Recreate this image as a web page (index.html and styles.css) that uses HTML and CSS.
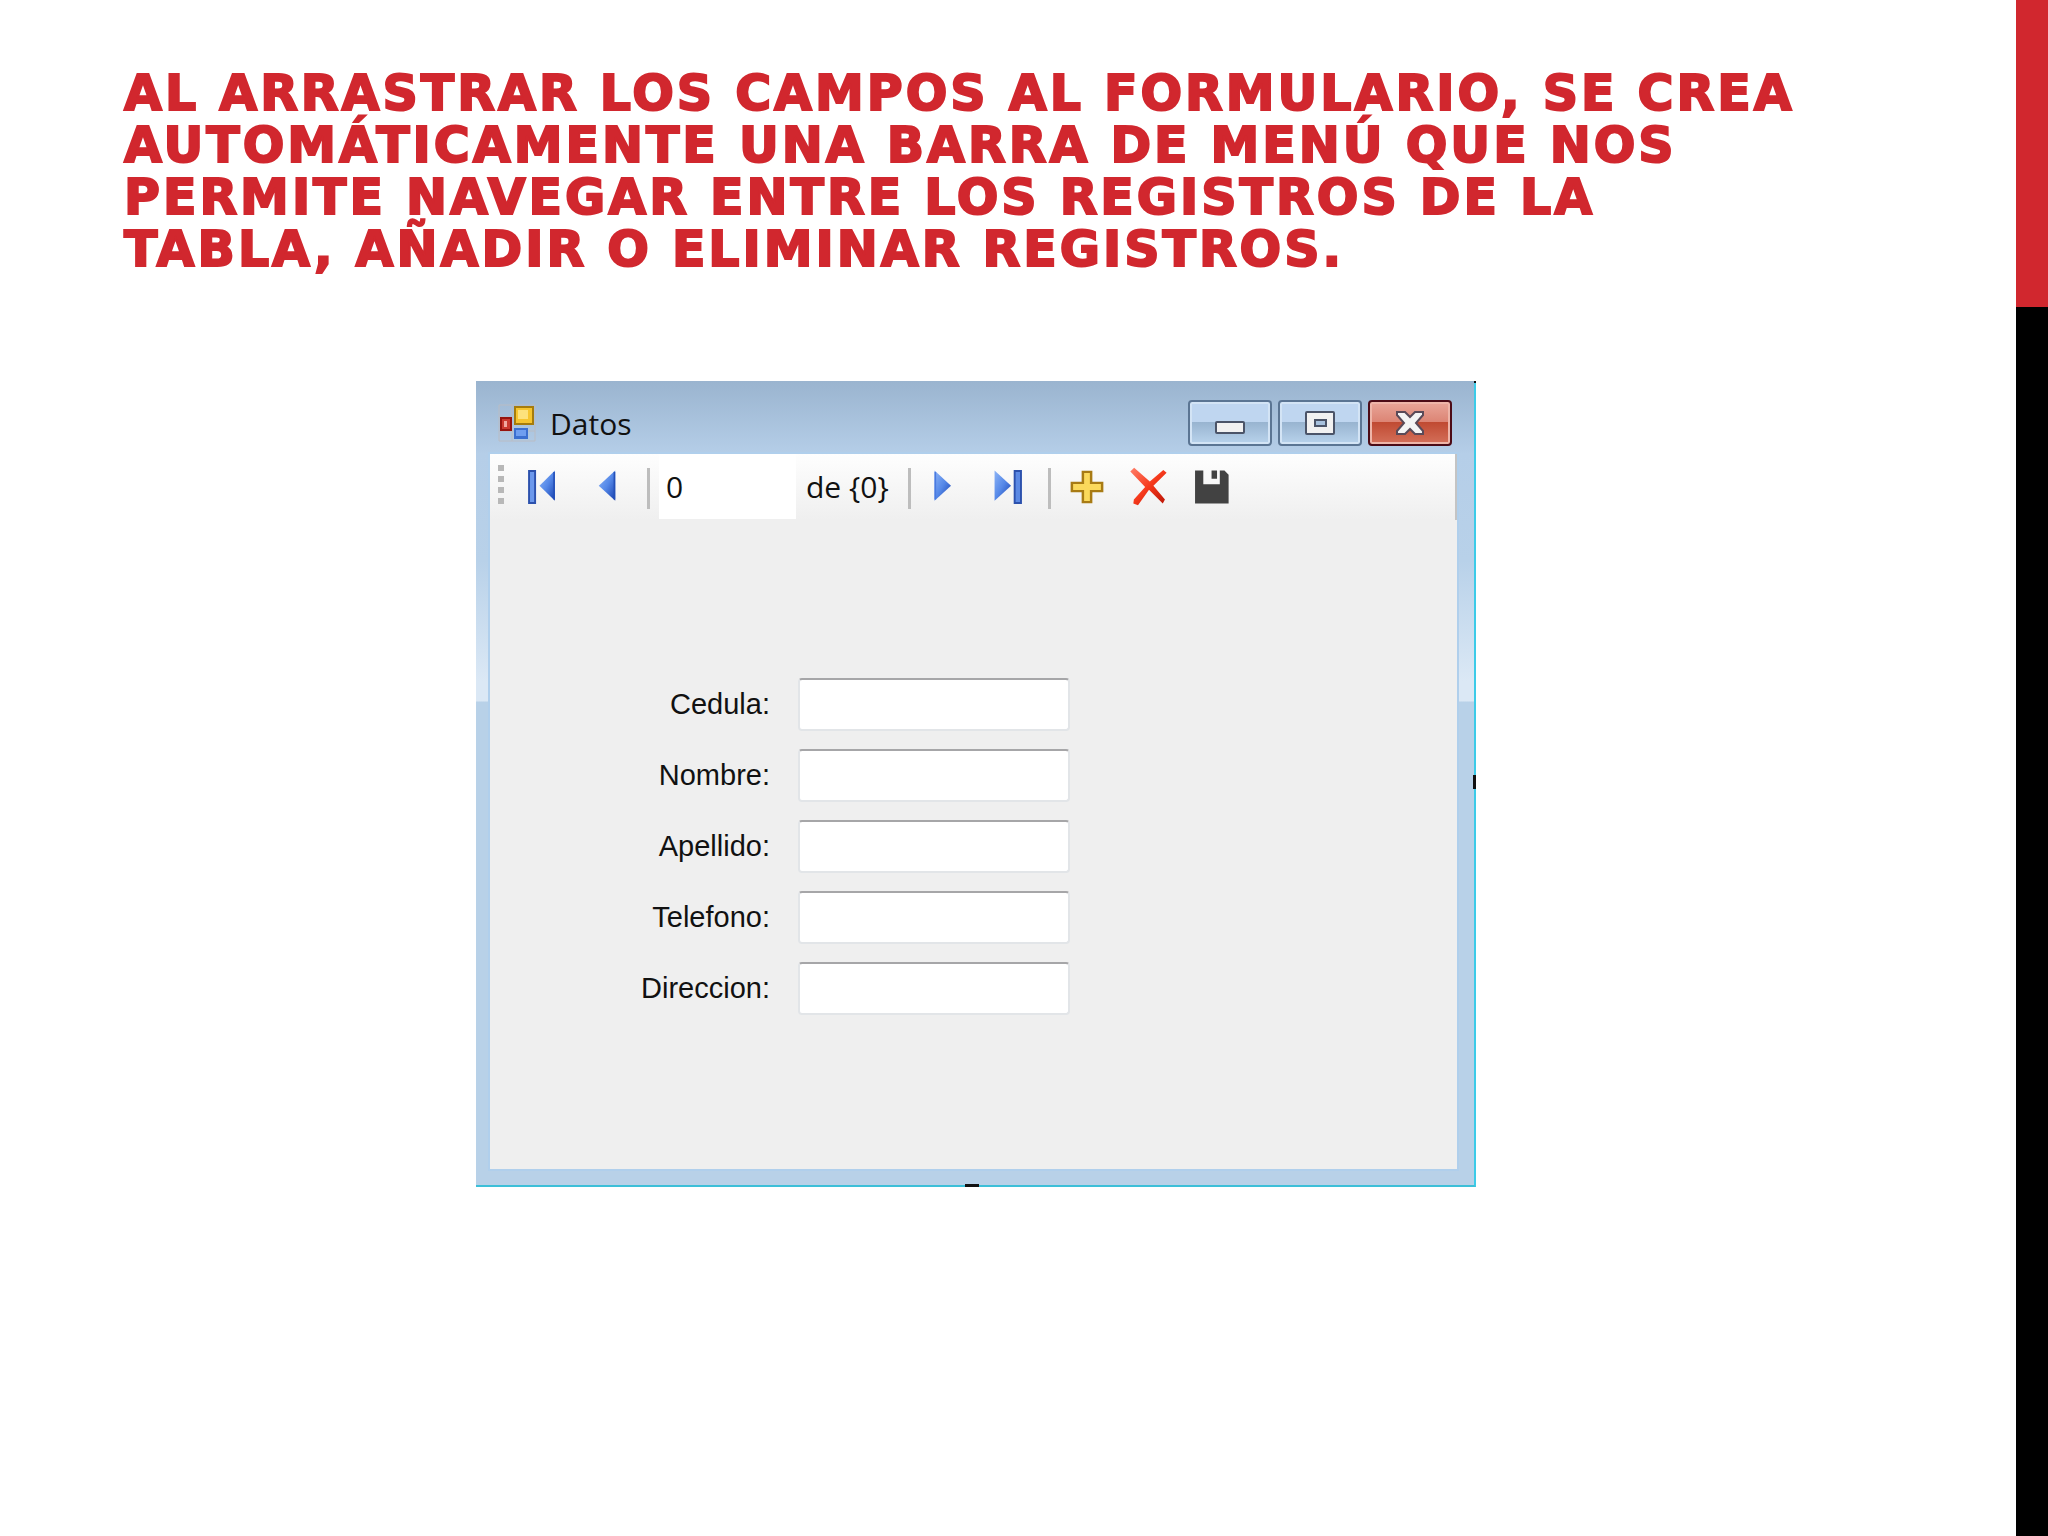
FILE: index.html
```html
<!DOCTYPE html>
<html lang="es">
<head>
  <meta charset="UTF-8">
  <meta name="viewport" content="width=device-width, initial-scale=1">
  <title>Barra de menú</title>
  <link rel="stylesheet" href="styles.css">
</head>
<body>

<main class="slide">
  <h1>Al arrastrar los campos al formulario, se crea automáticamente una barra de menú que nos permite navegar entre los registros de la tabla, añadir o eliminar registros.</h1>

  <section class="window">
    <header class="titlebar">
      <svg class="app-icon" viewBox="0 0 38 38">
        <path d="M1 1h36v36H1zM14 1v36M1 13h13M1 27h36" fill="none" stroke="#b9bcc4"/>
        <rect x="2" y="13" width="12" height="14" fill="#96140f"/>
        <rect x="4" y="15" width="8" height="10" fill="#cb3a30"/>
        <rect x="6" y="17" width="3" height="6" fill="#f2a9a0"/>
        <rect x="16" y="2" width="20" height="19" fill="#a67c0c"/>
        <rect x="18" y="4" width="16" height="15" fill="#f6c52f"/>
        <rect x="20" y="6" width="10" height="9" fill="#fde27c"/>
        <rect x="16" y="24" width="14" height="11" fill="#3b6fd0"/>
        <rect x="18" y="26" width="10" height="6" fill="#6f9ef0"/>
      </svg>
      <h2>Datos</h2>
      <div class="controls">
        <button type="button" class="control" aria-label="Minimizar">
          <svg viewBox="0 0 30 24"><rect x="1" y="11" width="28" height="11" rx="1" fill="#f1f1f1" stroke="#4b5468" stroke-width="2"/></svg>
        </button>
        <button type="button" class="control" aria-label="Maximizar">
          <svg viewBox="0 0 30 24">
            <rect x="1" y="1" width="28" height="22" rx="1" fill="#f1f1f1" stroke="#4b5468" stroke-width="2"/>
            <rect x="10" y="9" width="11" height="6" fill="#a8c2de" stroke="#4b5468" stroke-width="2"/>
          </svg>
        </button>
        <button type="button" class="control close" aria-label="Cerrar">
          <svg viewBox="0 0 30 24"><path d="M2 1h8l5 5 5-5h8v3l-7 8 7 8v3h-8l-5-5-5 5H2v-3l7-8-7-8z" fill="#f4f4f4" stroke="#5a4a58" stroke-width="2"/></svg>
        </button>
      </div>
    </header>

    <div class="client">
      <div class="toolbar">
        <span class="grip"></span>
        <button type="button" class="tool" aria-label="Primero">
          <svg viewBox="0 0 16 16"><path d="M2.200 2.200h2.200v11.600H2.200z" fill="#6c98ec" stroke="#2c51ad" stroke-width=".7"/><path d="M11.600 2v11L6 7.500z" fill="url(#blue)"/><path d="M11.300 2.500v10" stroke="#2450b8" stroke-width=".6"/></svg>
        </button>
        <button type="button" class="tool" aria-label="Anterior">
          <svg viewBox="0 0 16 16"><path d="M11 2v11L5 7.500z" fill="url(#blue)"/><path d="M10.700 2.500v10" stroke="#2450b8" stroke-width=".6"/></svg>
        </button>
        <span class="separator"></span>
        <input class="position" type="text" value="0" aria-label="Posición actual">
        <span class="count">de {0}</span>
        <span class="separator"></span>
        <button type="button" class="tool" aria-label="Siguiente">
          <svg viewBox="0 0 16 16"><path d="M2 2v11l6-5.500z" fill="url(#blue)"/><path d="M2.300 2.500v10" stroke="#4a7ae0" stroke-width=".6"/></svg>
        </button>
        <button type="button" class="tool" aria-label="Último">
          <svg viewBox="0 0 16 16"><path d="M1.300 2v11l6-5.500z" fill="url(#blue)"/><path d="M8.600 2.200h2.300v11.600H8.600z" fill="#5b89e4" stroke="#2c51ad" stroke-width=".7"/></svg>
        </button>
        <span class="separator tight"></span>
        <button type="button" class="tool" aria-label="Agregar nuevo">
          <svg viewBox="0 0 16 16"><path d="M6.500 2.500h3v4h4v3h-4v4h-3v-4h-4v-3h4z" fill="#fbd95c" stroke="#a87b14" stroke-width=".9"/></svg>
        </button>
        <button type="button" class="tool" aria-label="Eliminar">
          <svg viewBox="0 0 16 16"><path d="M1.200 2.400L2.600 1 8.300 6 13.200 1.800l1.200 1L9.600 7.500l4.200 5-.8 1.500-5-5L4 14.600 2.300 14l.2-1.500L6.600 8z" fill="url(#red)"/></svg>
        </button>
        <button type="button" class="tool" aria-label="Guardar datos">
          <svg viewBox="0 0 16 16"><path d="M2.200 2h3v5h6V2h1.700l1.500 1.500V14H2.200z" fill="#424242"/><path d="M8.200 2h2v3h-2z" fill="#424242"/></svg>
        </button>
      </div>

      <form class="fields">
        <label for="cedula">Cedula:</label>
        <input id="cedula" type="text">
        <label for="nombre">Nombre:</label>
        <input id="nombre" type="text">
        <label for="apellido">Apellido:</label>
        <input id="apellido" type="text">
        <label for="telefono">Telefono:</label>
        <input id="telefono" type="text">
        <label for="direccion">Direccion:</label>
        <input id="direccion" type="text">
      </form>
    </div>

    <span class="handle corner"></span>
    <span class="handle right"></span>
    <span class="handle bottom"></span>
  </section>
</main>

<aside class="stripe"></aside>

<!-- shared icon gradients -->
<svg class="defs" width="0" height="0">
  <linearGradient id="blue" x1="0" y1="0" x2="1" y2="1">
    <stop offset="0" stop-color="#8db4f6"/>
    <stop offset=".5" stop-color="#5588e8"/>
    <stop offset="1" stop-color="#1740ae"/>
  </linearGradient>
  <linearGradient id="red" x1="0" y1="0" x2="1" y2="1">
    <stop offset="0" stop-color="#ff7f6a"/>
    <stop offset=".5" stop-color="#f63a1c"/>
    <stop offset="1" stop-color="#b81204"/>
  </linearGradient>
</svg>

</body>
</html>
```
FILE: styles.css
```css
* {
  box-sizing: border-box;
}
body {
  margin: 0;
  min-height: 100vh;
  display: flex;
  background: #fff;
  color: #111;
  font-family: "Open Sans", "Noto Sans", sans-serif;
}
.slide {
  flex: 1;
  padding: 68px 188px 68px 124px;
}
h1 {
  margin: 0 0 105px;
  padding-right: 20px;
  color: #d1272e;
  font-family: "Arial Black", "DejaVu Sans", sans-serif;
  font-size: 49px;
  font-weight: 900;
  line-height: 52px;
  letter-spacing: 3px;
  text-transform: uppercase;
  -webkit-text-stroke: 2px #d1272e;
}
.stripe {
  width: 32px;
  background: linear-gradient(#d1272e 20%, #000 20%);
}
.defs {
  position: absolute;
}

/* window frame */
.window {
  position: relative;
  display: flex;
  flex-direction: column;
  max-width: 1000px;
  margin: 0 auto;
  padding: 0 17px 16px 14px;
  border-right: 2px solid #3ccbe8;
  border-bottom: 2px solid #3cbfd8;
  background: linear-gradient(#9ab4cf, #b5cee8 73px, #b8d1e9 180px, #dbe8f5 300px, #dbe8f5 320px, #b8d1e8 321px);
}
.titlebar {
  display: flex;
  align-items: center;
  height: 73px;
  padding: 11px 5px 0 8px;
}
.app-icon {
  width: 38px;
  height: 38px;
}
h2 {
  margin: 0 0 0 14px;
  font-size: 30px;
  font-weight: 400;
}
.controls {
  display: flex;
  gap: 6px;
  margin-left: auto;
}
.control {
  display: flex;
  align-items: center;
  justify-content: center;
  width: 84px;
  height: 46px;
  padding: 0;
  border: 2px solid #5b7593;
  border-radius: 4px;
  background: linear-gradient(#bfd6f0 48%, #98b4d0 48%, #b9d3ec);
  box-shadow: inset 0 0 0 2px #d3e4f5;
}
.control svg {
  width: 30px;
  height: 24px;
}
.control.close {
  border-color: #4c0b16;
  background: linear-gradient(#e9a699, #dc8474 48%, #c04a32 48%, #d4705a);
  box-shadow: inset 0 0 0 2px #eeb5a8;
}
.client {
  min-height: 715px;
  background: #efefef;
  box-shadow: 0 0 0 2px #b0cfec;
}

/* toolbar */
.toolbar {
  display: flex;
  align-items: flex-start;
  height: 66px;
  padding-left: 8px;
  background: linear-gradient(#fefefe, #efefef);
  border-right: 2px solid #c4c4c4;
}
.grip {
  width: 6px;
  height: 39px;
  margin: 11px 10px 0 0;
  background: repeating-linear-gradient(#b8b8b8 0 6px, transparent 6px 11px);
}
.tool {
  display: flex;
  align-items: center;
  justify-content: center;
  width: 62px;
  height: 66px;
  padding: 0;
  border: 0;
  background: none;
}
.tool svg {
  width: 44px;
  height: 44px;
}
.separator {
  width: 3px;
  height: 41px;
  margin: 14px 9px 0;
  background: #bdbdbd;
}
.separator.tight {
  margin: 14px 5px 0 4px;
}
.position {
  width: 137px;
  height: 65px;
  padding: 0 7px;
  border: 0;
  background: #fff;
  color: inherit;
  font: inherit;
  font-size: 30px;
}
.count {
  padding: 0 10px;
  font-size: 30px;
  line-height: 65px;
}

/* data fields */
.fields {
  display: grid;
  grid-template-columns: 130px 272px;
  gap: 18px 28px;
  align-items: center;
  padding: 158px 0 0 150px;
}
.fields label {
  font-family: "Liberation Sans", Arial, sans-serif;
  font-size: 29px;
  text-align: right;
}
.fields input {
  width: 100%;
  height: 53px;
  padding: 0 8px;
  border: 2px solid #e2e5e8;
  border-top-color: #a6a6a8;
  border-radius: 4px;
  background: #fff;
  font-size: 29px;
}

/* resize handles */
.handle {
  position: absolute;
  background: #111;
}
.handle.corner {
  top: 0;
  right: -2px;
  width: 2px;
  height: 2px;
}
.handle.right {
  top: 49%;
  right: -2px;
  width: 3px;
  height: 14px;
}
.handle.bottom {
  bottom: -2px;
  left: 49%;
  width: 14px;
  height: 3px;
}
```
